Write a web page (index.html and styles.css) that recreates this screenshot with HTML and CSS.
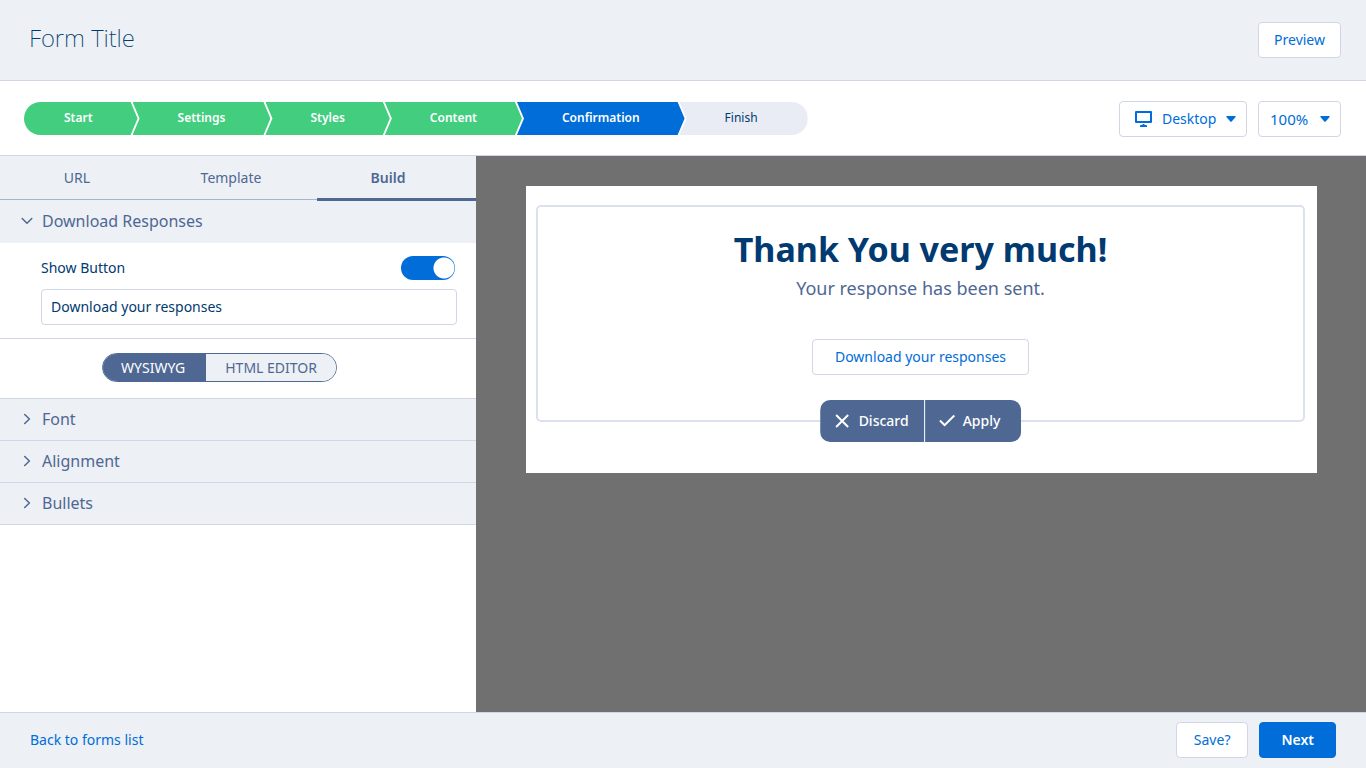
FILE: index.html
```html
<!DOCTYPE html>
<html lang="en">
<head>
<meta charset="utf-8">
<meta name="viewport" content="width=device-width, initial-scale=1">
<title>Form Title</title>
<link rel="stylesheet" href="styles.css">
</head>
<body>
<div class="app">
  <header class="header">
    <h1 class="header-title">Form Title</h1>
    <button class="btn btn-preview" type="button">Preview</button>
  </header>

  <div class="toolbar">
    <ol class="steps">
      <li class="step step-first">Start</li>
      <li class="step">Settings</li>
      <li class="step">Styles</li>
      <li class="step">Content</li>
      <li class="step step-current" aria-current="step">Confirmation</li>
      <li class="step step-last">Finish</li>
    </ol>
    <div class="view-options">
      <div class="picker">
        <select class="select select-device" aria-label="Device"><option>Desktop</option></select>
        <svg class="picker-device" width="17" height="17" viewBox="0 0 17 17" aria-hidden="true"><path fill="currentColor" fill-rule="evenodd" d="M1 0h15a1 1 0 0 1 1 1v10a1 1 0 0 1-1 1H1a1 1 0 0 1-1-1V1a1 1 0 0 1 1-1zm1 2v8h13V2zM7.500 13h2v1h1.500a1 1 0 0 1 1 1v1H5v-1a1 1 0 0 1 1-1h1.500z"/></svg>
        <svg class="picker-caret" width="10" height="6" viewBox="0 0 10 6" aria-hidden="true"><path fill="currentColor" d="M1 0h8q1 0 .6.900L5.700 5.600q-.7.800-1.400 0L.4.900Q0 0 1 0z"/></svg>
      </div>
      <div class="picker">
        <select class="select select-zoom" aria-label="Zoom"><option>100%</option></select>
        <svg class="picker-caret" width="10" height="6" viewBox="0 0 10 6" aria-hidden="true"><path fill="currentColor" d="M1 0h8q1 0 .6.900L5.700 5.600q-.7.800-1.400 0L.4.900Q0 0 1 0z"/></svg>
      </div>
    </div>
  </div>

  <main class="workspace">
    <aside class="sidebar">
      <div class="tabs" role="tablist">
        <button class="tab" type="button" role="tab" aria-selected="false">URL</button>
        <button class="tab tab-template" type="button" role="tab" aria-selected="false">Template</button>
        <button class="tab tab-active" type="button" role="tab" aria-selected="true">Build</button>
      </div>

      <button class="section section-open" type="button" aria-expanded="true">
        <svg class="chevron" width="12" height="12" viewBox="0 0 12 12" aria-hidden="true"><path d="M1.200 3.500L6 8.200l4.800-4.700"/></svg>
        Download Responses
      </button>
      <div class="settings">
        <div class="settings-row">
          <label class="settings-label" for="show-button">Show Button</label>
          <input class="switch" id="show-button" type="checkbox" checked>
        </div>
        <input class="text-field" type="text" value="Download your responses" aria-label="Button text">
      </div>
      <div class="editor-mode">
        <div class="segmented">
          <button class="segment segment-active" type="button" aria-pressed="true">WYSIWYG</button>
          <button class="segment" type="button" aria-pressed="false">HTML EDITOR</button>
        </div>
      </div>
      <button class="section" type="button" aria-expanded="false">
        <svg class="chevron" width="12" height="12" viewBox="0 0 12 12" aria-hidden="true"><path d="M3.700 1.500l4.700 4.500-4.700 4.500"/></svg>
        Font
      </button>
      <button class="section" type="button" aria-expanded="false">
        <svg class="chevron" width="12" height="12" viewBox="0 0 12 12" aria-hidden="true"><path d="M3.700 1.500l4.700 4.500-4.700 4.500"/></svg>
        Alignment
      </button>
      <button class="section" type="button" aria-expanded="false">
        <svg class="chevron" width="12" height="12" viewBox="0 0 12 12" aria-hidden="true"><path d="M3.700 1.500l4.700 4.500-4.700 4.500"/></svg>
        Bullets
      </button>
    </aside>

    <section class="canvas">
      <div class="sheet">
        <div class="block">
          <h2 class="block-title">Thank You very much!</h2>
          <p class="block-text">Your response has been sent.</p>
          <button class="btn btn-download" type="button">Download your responses</button>
          <div class="actions">
            <button class="action" type="button">
              <svg width="14" height="14" viewBox="0 0 14 14" aria-hidden="true"><path d="M1 1l12 12M13 1L1 13"/></svg>
              Discard
            </button>
            <button class="action action-apply" type="button">
              <svg width="16" height="14" viewBox="0 0 16 14" aria-hidden="true"><path d="M.8 6.500l4.700 4.700L15.200 1.500"/></svg>
              Apply
            </button>
          </div>
        </div>
      </div>
    </section>
  </main>

  <footer class="footer">
    <a class="back-link" href="#">Back to forms list</a>
    <div class="footer-actions">
      <button class="btn btn-save" type="button">Save?</button>
      <button class="btn btn-next" type="button">Next</button>
    </div>
  </footer>
</div>
</body>
</html>
```

FILE: styles.css
```css
:root {
  --blue: #006dd9;
  --navy: #003a70;
  --slate: #4e6893;
  --pale: #edf0f5;
  --line: #d0d6e7;
  --green: #42cd7f;
}

* {
  box-sizing: border-box;
}

body {
  margin: 0;
  font-family: "Noto Sans", sans-serif;
  font-size: 14px;
  line-height: 20px;
  color: var(--navy);
}

button,
input,
select {
  margin: 0;
  font: inherit;
}

.app {
  display: flex;
  flex-direction: column;
  min-height: 100vh;
  background: #fff;
}

.header {
  display: flex;
  align-items: center;
  justify-content: space-between;
  padding: 22px 25px 22px 29px;
  background: var(--pale);
  border-bottom: 1px solid var(--line);
}

.header-title {
  margin: 0;
  padding-bottom: 4px;
  font-size: 24px;
  line-height: 32px;
  font-weight: 200;
}

.btn {
  height: 36px;
  padding: 0 15px;
  border: 1px solid var(--line);
  border-radius: 4px;
  background: #fff;
  color: var(--blue);
}

.toolbar {
  display: flex;
  align-items: center;
  justify-content: space-between;
  padding: 20px 25px 18px 24px;
  border-bottom: 1px solid var(--line);
}

.steps {
  display: flex;
  margin: 0 0 1px;
  padding: 0;
  list-style: none;
  border-radius: 17px;
  overflow: hidden;
}

.step {
  margin-left: -5px;
  padding: 0 45px 1px;
  font-size: 12px;
  line-height: 32px;
  font-weight: 600;
  color: #fff;
  background: var(--green);
  clip-path: polygon(0 0, calc(100% - 7px) 0, 100% 50%, calc(100% - 7px) 100%, 0 100%, 7px 50%);
}

.step-first {
  margin-left: 0;
  padding-left: 40px;
  clip-path: polygon(0 0, calc(100% - 7px) 0, 100% 50%, calc(100% - 7px) 100%, 0 100%);
}

.step-current {
  background: var(--blue);
}

.step-last {
  padding-right: 50px;
  font-weight: 400;
  color: var(--navy);
  background: #e9ecf4;
  clip-path: polygon(0 0, 100% 0, 100% 100%, 0 100%, 7px 50%);
}

.view-options {
  display: flex;
  gap: 11px;
}

.picker {
  display: grid;
  align-items: center;
  color: var(--blue);
}

.picker > * {
  grid-area: 1 / 1;
}

.picker > svg {
  pointer-events: none;
}

.picker-device {
  margin-left: 16px;
}

.picker-caret {
  justify-self: end;
  margin-right: 11px;
}

.select {
  appearance: none;
  height: 36px;
  border: 1px solid var(--line);
  border-radius: 4px;
  background: #fff;
  color: var(--blue);
}

.select-device {
  width: 128px;
  padding: 0 30px 0 42px;
}

.select-zoom {
  width: 83px;
  padding: 0 26px 0 11px;
  font-size: 15px;
}

.workspace {
  display: flex;
  flex: 1;
}

.sidebar {
  flex: 0 0 476px;
}

.tabs {
  display: grid;
  grid-template-columns: 154px 163px 1fr;
  background: var(--pale);
}

.tab {
  height: 45px;
  padding: 0 0 1px;
  border: 0;
  background: linear-gradient(#a5b6d0, #a5b6d0) 0 43px / 100% 1px no-repeat;
  color: var(--slate);
}

.tab-template {
  padding-right: 9px;
}

.tab-active {
  padding-right: 17px;
  background: linear-gradient(var(--slate), var(--slate)) 0 42px / 100% 3px no-repeat;
  font-weight: 600;
}

.section {
  display: flex;
  align-items: center;
  gap: 9px;
  width: 100%;
  height: 42px;
  padding: 0 21px 1px;
  border: 0;
  border-bottom: 1px solid var(--line);
  background: var(--pale);
  color: var(--slate);
  font-size: 16px;
  text-align: left;
}

.section-open {
  border-bottom-color: var(--pale);
}

.chevron {
  fill: none;
  stroke: currentColor;
  stroke-width: 1.500;
  stroke-linecap: round;
  stroke-linejoin: round;
}

.settings {
  padding: 13px 19px 13px 41px;
  border-bottom: 1px solid var(--line);
}

.settings-row {
  display: flex;
  align-items: center;
  justify-content: space-between;
  padding-right: 2px;
}

.switch {
  appearance: none;
  width: 54px;
  height: 24px;
  border-radius: 12px;
  background: radial-gradient(circle at 43px 12px, #fff 10px, var(--blue) 11px);
}

.text-field {
  display: block;
  width: 100%;
  height: 36px;
  margin-top: 9px;
  padding: 0 9px 1px;
  border: 1px solid var(--line);
  border-radius: 4px;
  color: var(--navy);
}

.editor-mode {
  display: flex;
  padding: 14px 102px 16px;
  border-bottom: 1px solid var(--line);
}

.segmented {
  display: flex;
  height: 29px;
  border: 1px solid var(--slate);
  border-radius: 15px;
  overflow: hidden;
}

.segment {
  padding: 0 19px;
  border: 0;
  background: var(--pale);
  color: var(--slate);
}

.segment-active {
  padding: 0 21px 0 18px;
  background: var(--slate);
  color: #fff;
}

.canvas {
  flex: 1;
  padding: 30px 49px 30px 50px;
  background: #707070;
}

.sheet {
  padding: 19px 12px 51px 10px;
  background: #fff;
}

.block {
  position: relative;
  display: flex;
  flex-direction: column;
  align-items: center;
  padding: 20px 0 45px;
  border: 2px solid #dce1ee;
  border-radius: 5px;
}

.block-title {
  margin: 0;
  font-size: 34px;
  line-height: 44px;
  font-weight: 700;
}

.block-text {
  margin: 3px 0 37px;
  font-size: 18px;
  line-height: 28px;
  color: var(--slate);
}

.btn-download {
  padding: 0 22px;
}

.actions {
  position: absolute;
  left: 50%;
  bottom: -22px;
  display: flex;
  height: 42px;
  border-radius: 10px;
  overflow: hidden;
  transform: translateX(-50%);
}

.action {
  display: flex;
  align-items: center;
  gap: 10px;
  padding: 0 15px;
  border: 0;
  background: var(--slate);
  color: #fff;
  font-weight: 500;
}

.action svg {
  fill: none;
  stroke: currentColor;
  stroke-width: 2;
}

.action-apply {
  gap: 8px;
  padding: 0 21px 0 14px;
  border-left: 1px solid #fff;
}

.footer {
  display: flex;
  align-items: center;
  justify-content: space-between;
  padding: 9px 30px 10px;
  background: var(--pale);
  border-top: 1px solid var(--line);
}

.back-link {
  color: var(--blue);
  text-decoration: none;
}

.footer-actions {
  display: flex;
  gap: 11px;
}

.btn-save {
  padding: 0 17px;
}

.btn-next {
  padding: 0 21px;
  border-color: var(--blue);
  background: var(--blue);
  color: #fff;
  font-weight: 600;
}
```
